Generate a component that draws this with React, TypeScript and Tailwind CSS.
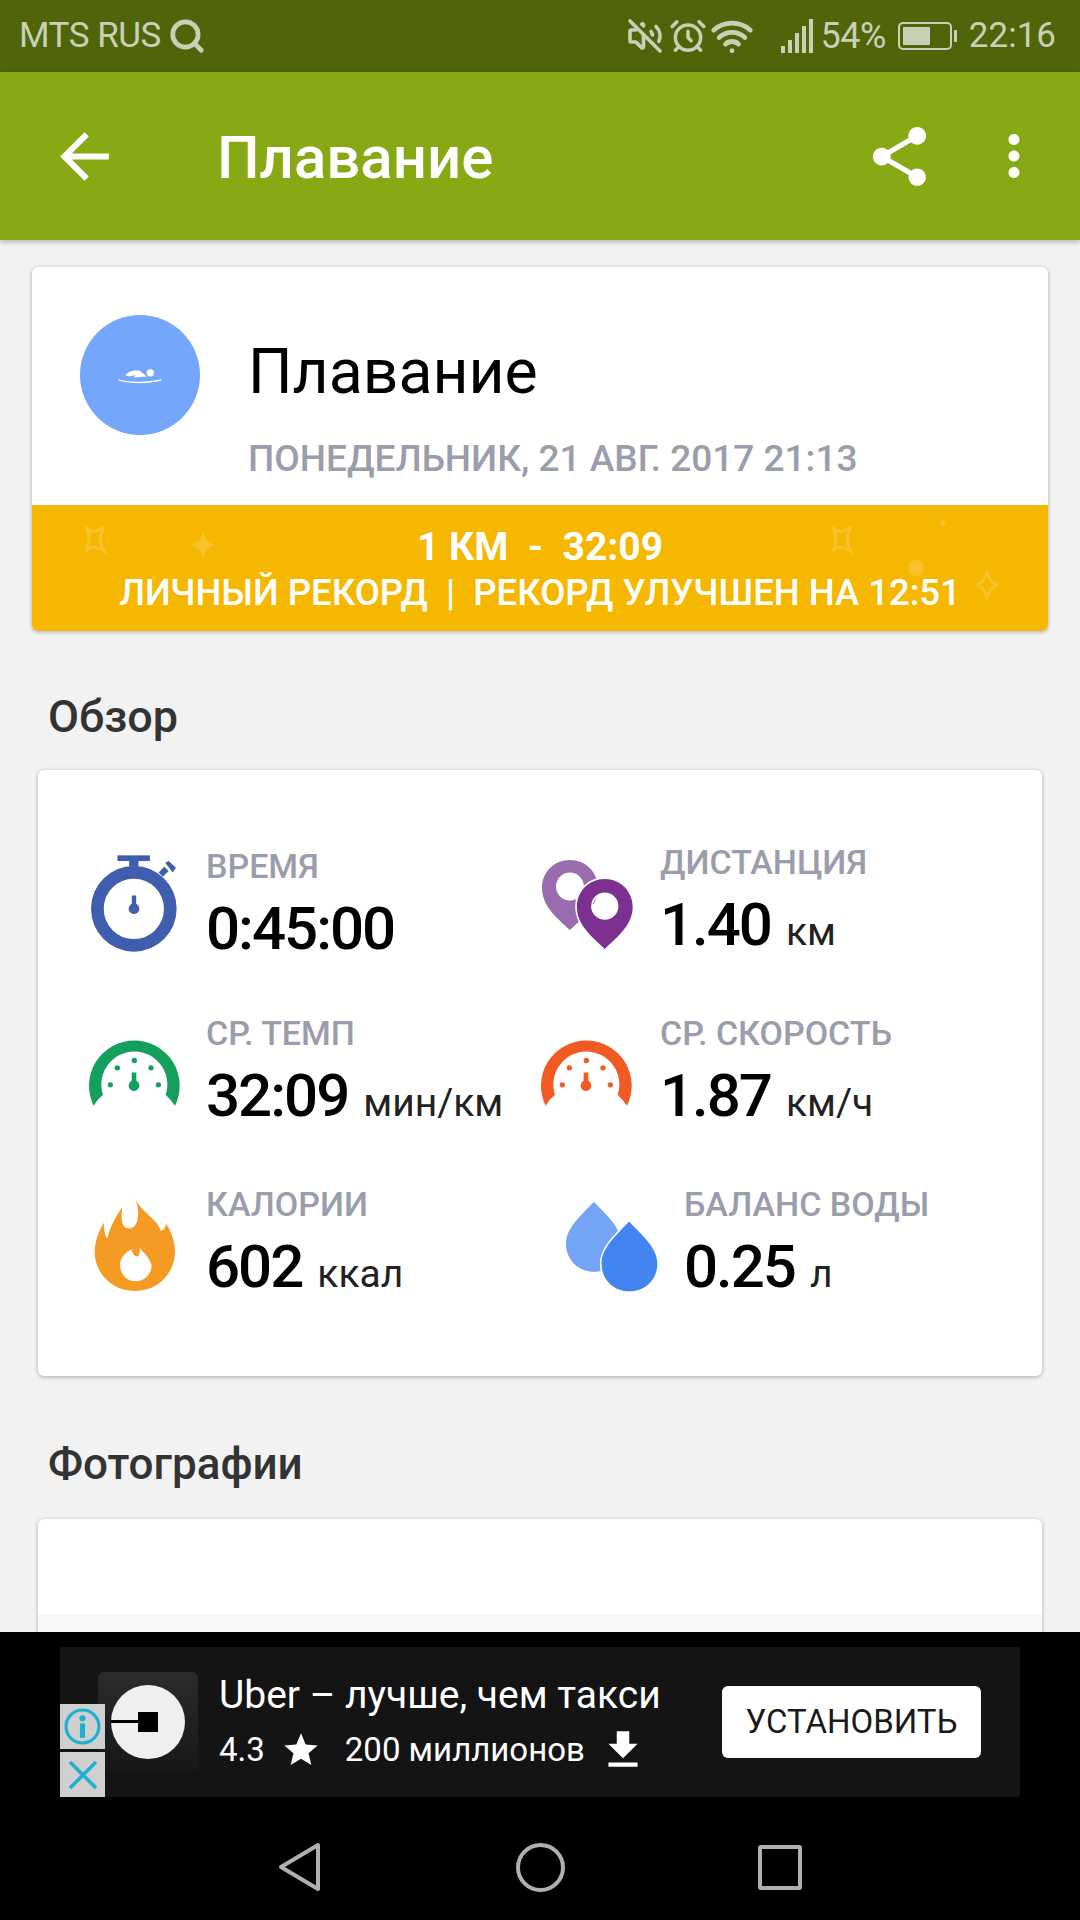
import { AlarmClock, Search, VolumeOff, Wifi } from "lucide-react";
import { MdArrowBack, MdFileDownload, MdMoreVert, MdShare, MdStar } from "react-icons/md";

function Stopwatch() {
  return (
    <svg viewBox="85 95 275 305" className="w-[92px] h-[102px] -ml-[1px]">
      <rect x="173" y="105" width="97" height="17" fill="#3f5fae" />
      <rect x="208" y="115" width="28" height="35" fill="#3f5fae" />
      <path d="M296 156 L313 139 L326 152 L309 169Z" fill="#3f5fae" />
      <path d="M316 127 L326 122 L348 142 L338 156Z" fill="#3f5fae" />
      <circle cx="222" cy="265" r="109" fill="none" stroke="#3f5fae" strokeWidth="38" />
      <path d="M216 225 H229 V250 A16 16 0 1 1 216 250Z" fill="#3f5fae" />
    </svg>
  );
}

function Gauge({ color }: { color: string }) {
  return (
    <svg viewBox="80 652 285 212" className="w-[95px] h-[71px] -ml-[2px]">
      <path
        d="M100 858 A136 136 0 1 1 344 858 Q330 838 316 825 A99 99 0 1 0 128 825 Q112 838 100 858Z"
        fill={color}
      />
      <circle cx="222" cy="722" r="8" fill={color} />
      <circle cx="171" cy="744" r="8" fill={color} />
      <circle cx="272" cy="744" r="8" fill={color} />
      <circle cx="150" cy="795" r="8" fill={color} />
      <circle cx="294" cy="795" r="8" fill={color} />
      <path d="M214 758 H228 V783 A16 16 0 1 1 214 783Z" fill={color} />
    </svg>
  );
}

function Flame() {
  return (
    <svg viewBox="100 1125 245 290" className="w-[82px] h-[97px]">
      <path
        d="M220 1128 C240 1180 285 1190 300 1232 C312 1228 315 1218 315 1210 C335 1240 342 1270 342 1295 C342 1360 290 1412 222 1412 C155 1412 102 1360 102 1295 C102 1265 115 1230 130 1208 C130 1225 130 1245 140 1255 C145 1225 165 1190 185 1160 C180 1190 180 1225 205 1225 C235 1225 240 1170 220 1128Z"
        fill="#f59a23"
      />
      <path
        d="M235 1278 C240 1295 262 1300 272 1335 C272 1362 250 1383 225 1383 C198 1383 178 1362 178 1335 C178 1312 195 1295 212 1288 C215 1300 222 1310 230 1308 C238 1305 238 1290 235 1278Z"
        fill="#fff"
      />
    </svg>
  );
}

function Pins() {
  return (
    <svg viewBox="65 115 280 275" className="w-[93px] h-[92px]">
      <path
        fillRule="evenodd"
        d="M152 328 C110 290 68 255 68 200 C68 153 105 117 152 117 C199 117 236 153 236 200 C236 255 194 290 152 328Z M152 155 A42 42 0 1 0 152 239 A42 42 0 1 0 152 155Z"
        fill="#9b6bb0"
      />
      <path
        fillRule="evenodd"
        d="M257 385 C215 345 173 312 173 258 C173 211 210 174 257 174 C304 174 341 211 341 258 C341 312 299 345 257 385Z M257 215 A41 41 0 1 0 257 297 A41 41 0 1 0 257 215Z"
        fill="#7d3092"
        stroke="#fff"
        strokeWidth="10"
        paintOrder="stroke"
      />
    </svg>
  );
}

function Drops() {
  return (
    <svg viewBox="135 1130 280 280" className="w-[93px] h-[93px]">
      <path
        d="M222 1135 C265 1180 305 1215 305 1262 C305 1310 270 1346 222 1346 C174 1346 138 1310 138 1262 C138 1215 180 1180 222 1135Z"
        fill="#74a4f5"
      />
      <path
        d="M328 1195 C370 1240 413 1275 413 1322 C413 1370 376 1405 329 1405 C282 1405 245 1370 245 1322 C245 1275 286 1240 328 1195Z"
        fill="#4285f0"
        stroke="#fff"
        strokeWidth="10"
        paintOrder="stroke"
      />
    </svg>
  );
}

function Stat({
  icon,
  label,
  value,
  unit,
  slot,
}: {
  icon: React.ReactNode;
  label: string;
  value: string;
  unit?: string;
  slot: string;
}) {
  return (
    <div className="flex items-center h-[171px]">
      <div className={slot}>{icon}</div>
      <div className="flex flex-col whitespace-nowrap">
        <span className="text-[34px] leading-[34px] font-medium text-[#9a9dac]">{label}</span>
        <span className="mt-[14px] flex items-baseline leading-[64px] text-black">
          <span className="text-[60px] font-medium tracking-[-2px]">{value}</span>
          {unit && <span className="ml-[15px] text-[39px] text-[#222]">{unit}</span>}
        </span>
      </div>
    </div>
  );
}

export default function App() {
  return (
    <div className="w-[1080px] h-[1920px] flex flex-col overflow-hidden bg-black font-['Roboto',sans-serif]">
      {/* status bar */}
      <div className="h-[72px] flex-none flex items-center bg-[#50650a] pl-[19px] pr-[24px] text-[#c9d0b5] text-[35px]">
        <span className="tracking-[-0.5px]">MTS RUS</span>
        <Search size={38} strokeWidth={3} className="ml-[7px]" />
        <div className="ml-auto flex items-center">
          <VolumeOff size={36} strokeWidth={2.4} />
          <AlarmClock size={38} strokeWidth={2.2} className="ml-[6px]" />
          <Wifi size={44} strokeWidth={2.6} className="ml-[3px]" />
          <svg viewBox="0 0 34 34" className="ml-[27px] w-[34px] h-[34px]">
            <rect x="0" y="27" width="4" height="7" fill="#c9d0b5" />
            <rect x="7" y="21" width="4" height="13" fill="#c9d0b5" />
            <rect x="14" y="14" width="4" height="20" fill="#c9d0b5" />
            <rect x="21" y="7" width="4" height="27" fill="#c9d0b5" />
            <rect x="28" y="0" width="4" height="34" fill="#c9d0b5" />
          </svg>
          <span className="ml-[5px] text-[36px] tracking-[-0.5px]">54%</span>
          <svg viewBox="0 0 60 28" className="ml-[12px] w-[60px] h-[28px]">
            <rect x="1" y="1" width="52" height="26" rx="4" fill="none" stroke="#c9d0b5" strokeWidth="2" />
            <rect x="5" y="5" width="27" height="18" rx="1" fill="#c9d0b5" />
            <rect x="56" y="8" width="3" height="12" rx="1" fill="#c9d0b5" />
          </svg>
          <span className="ml-[11px]">22:16</span>
        </div>
      </div>

      {/* app bar */}
      <div className="relative z-10 h-[168px] flex-none flex items-center bg-[#87a913] pl-[48px] pr-[33px] text-white shadow-[0_2px_5px_rgba(0,0,0,0.25)]">
        <MdArrowBack size={73} />
        <span className="ml-[96px] mt-[4px] text-[60px] font-medium">Плавание</span>
        <MdShare size={71} className="ml-auto" />
        <MdMoreVert size={66} className="ml-[46px]" />
      </div>

      {/* scrolling content */}
      <div className="flex-1 min-h-0 overflow-hidden bg-[#f2f2f2] pt-[27px]">
        <div className="mx-[32px] h-[364px] rounded-[6px] overflow-hidden bg-white shadow-[0_1px_4px_rgba(0,0,0,0.3)]">
          <div className="h-[238px] flex pl-[48px] pt-[48px]">
            <div className="w-[120px] h-[120px] flex-none rounded-full bg-[#74a6fb] flex items-center justify-center">
              <svg viewBox="175 205 135 50" className="w-[45px] h-[17px]">
                <circle cx="272" cy="222" r="11" fill="#fff" />
                <path d="M197 229 C205 217 225 212 240 216 L262 233 L222 236 L228 230 C218 228 206 236 197 229Z" fill="#fff" />
                <path d="M177 241 C215 252 265 250 305 241 L305 246 C265 255 215 256 177 246Z" fill="#fff" />
              </svg>
            </div>
            <div className="ml-[48px] flex flex-col">
              <span className="mt-[25px] text-[62.5px] leading-[64px] text-black">Плавание</span>
              <span className="mt-[35px] text-[37px] leading-[40px] font-medium text-[#9a9dac] whitespace-nowrap">
                ПОНЕДЕЛЬНИК, 21 АВГ. 2017 21:13
              </span>
            </div>
          </div>
          <div className="relative h-[126px] bg-[#f5b700] flex flex-col items-center text-white font-medium">
            <svg viewBox="0 0 1016 126" className="absolute inset-0 w-[1016px] h-[126px]">
              <g fill="none" stroke="#f8c22c" strokeWidth="3">
                <path d="M54 22 C58 28 62 28 72 22 C67 30 67 38 72 46 C62 41 58 41 54 46 C58 38 58 30 54 22Z" />
                <path d="M801 22 C805 28 809 28 819 22 C814 30 814 38 819 46 C809 41 805 41 801 46 C805 38 805 30 801 22Z" />
                <path d="M955 66 Q957 78 966 80 Q957 82 955 94 Q953 82 944 80 Q953 78 955 66Z" />
              </g>
              <g fill="#f8c22c">
                <path d="M171 26 Q173 38 183 40 Q173 42 171 54 Q169 42 159 40 Q169 38 171 26Z" />
                <circle cx="911" cy="18" r="3" />
                <circle cx="884" cy="63" r="8" />
              </g>
            </svg>
            <span className="relative mt-[22px] text-[39px] leading-[40px] font-bold whitespace-pre">1 КМ  -  32:09</span>
            <span className="relative mt-[6px] text-[36.5px] leading-[40px] whitespace-pre">ЛИЧНЫЙ РЕКОРД  |  РЕКОРД УЛУЧШЕН НА 12:51</span>
          </div>
        </div>

        <div className="ml-[48px] h-[139px] pt-[32px] flex items-center text-[45px] font-medium text-[#333]">Обзор</div>

        <div className="mx-[38px] h-[606px] rounded-[6px] bg-white shadow-[0_1px_4px_rgba(0,0,0,0.3)] pl-[51px] pt-[49px] grid grid-cols-[452px_1fr] content-start">
          <Stat slot="w-[117px] flex-none mb-[4px]" icon={<Stopwatch />} label="ВРЕМЯ" value="0:45:00" />
          <Stat slot="w-[119px] flex-none" icon={<Pins />} label="ДИСТАНЦИЯ" value="1.40" unit="км" />
          <Stat slot="w-[117px] flex-none mb-[6px]" icon={<Gauge color="#12a05c" />} label="СР. ТЕМП" value="32:09" unit="мин/км" />
          <Stat slot="w-[119px] flex-none mb-[6px]" icon={<Gauge color="#f15a22" />} label="СР. СКОРОСТЬ" value="1.87" unit="км/ч" />
          <Stat slot="w-[117px] flex-none pl-[5px] mb-[6px]" icon={<Flame />} label="КАЛОРИИ" value="602" unit="ккал" />
          <Stat slot="w-[143px] flex-none pl-[24px]" icon={<Drops />} label="БАЛАНС ВОДЫ" value="0.25" unit="л" />
        </div>

        <div className="ml-[48px] h-[143px] pt-[32px] flex items-center text-[44px] font-medium text-[#333]">Фотографии</div>

        <div className="mx-[38px] h-[300px] rounded-t-[6px] overflow-hidden bg-white shadow-[0_1px_4px_rgba(0,0,0,0.3)]">
          <div className="h-[95px]" />
          <div className="h-[205px] bg-[#f7f7f7]" />
        </div>
      </div>

      {/* ad + nav */}
      <div className="h-[288px] flex-none bg-black pt-[15px]">
        <div className="relative ml-[60px] w-[960px] h-[150px] rounded-[3px] bg-[#141414] flex items-center pl-[38px]">
          <div className="w-[100px] h-[100px] flex-none rounded-[6px] bg-gradient-to-b from-[#2c2c2c] to-[#171717] flex items-center justify-center">
            <svg viewBox="0 0 74 74" className="w-[74px] h-[74px]">
              <circle cx="37" cy="37" r="37" fill="#efefef" />
              <rect x="0" y="35" width="28" height="3" fill="#000" />
              <rect x="27" y="27" width="20" height="20" fill="#000" />
            </svg>
          </div>
          <div className="ml-[21px] mt-[4px] flex flex-col text-white whitespace-nowrap">
            <span className="text-[39px] leading-[44px]">Uber – лучше, чем такси</span>
            <div className="mt-[8px] flex items-center text-[33px] leading-[44px]">
              <span>4.3</span>
              <MdStar size={40} className="ml-[16px]" />
              <span className="ml-[24px]">200 миллионов</span>
              <MdFileDownload size={50} className="ml-[13px]" />
            </div>
          </div>
          <div className="ml-auto mr-[39px] w-[259px] h-[72px] rounded-[6px] bg-white flex items-center justify-center text-[33px] text-[#1a1a1a]">
            УСТАНОВИТЬ
          </div>
          <div className="absolute left-0 top-[57px] flex flex-col gap-[3px]">
            <div className="w-[45px] h-[45px] bg-[#cfcfcf] flex items-center justify-center">
              <svg viewBox="0 0 36 36" className="w-[37px] h-[37px]">
                <circle cx="18" cy="18" r="16" fill="none" stroke="#1ab0d0" strokeWidth="3" />
                <circle cx="18" cy="10" r="3" fill="#1ab0d0" />
                <rect x="15.5" y="15" width="5" height="14" fill="#1ab0d0" />
              </svg>
            </div>
            <div className="w-[45px] h-[45px] bg-[#cfcfcf] flex items-center justify-center">
              <svg viewBox="0 0 30 30" className="w-[30px] h-[30px]">
                <path d="M2 2 L28 28 M28 2 L2 28" stroke="#1ab0d0" strokeWidth="3.5" />
              </svg>
            </div>
          </div>
        </div>
        <div className="mt-[45px] flex items-center justify-center">
          <svg viewBox="0 0 44 50" className="w-[44px] h-[50px]">
            <path d="M40 3 L3 25 L40 47Z" fill="none" stroke="#b0b0b0" strokeWidth="4" strokeLinejoin="round" />
          </svg>
          <div className="ml-[194px] w-[49px] h-[49px] rounded-full border-[4px] border-[#b0b0b0]" />
          <div className="ml-[193px] w-[44px] h-[45px] rounded-[3px] border-[4px] border-[#b0b0b0]" />
        </div>
      </div>
    </div>
  );
}
